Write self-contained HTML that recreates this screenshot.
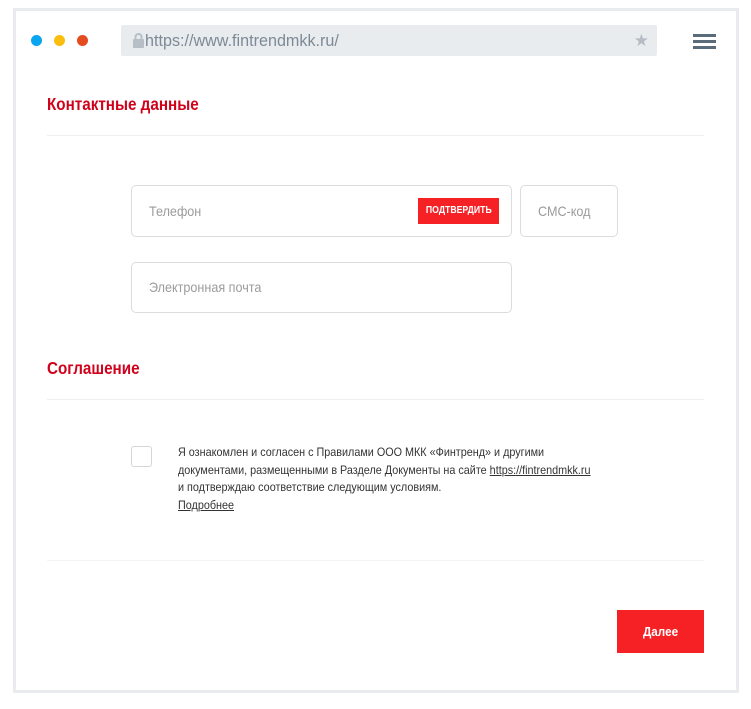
<!DOCTYPE html>
<html><head><meta charset="utf-8"><style>
*{box-sizing:border-box;margin:0;padding:0}
body{width:751px;height:709px;background:#fff;font-family:"Liberation Sans Narrow","Liberation Sans",sans-serif;position:relative;overflow:hidden}
.frame{position:absolute;left:13px;top:8px;width:726px;height:685px;border:3px solid #e9ebee}
.dot{position:absolute;top:35px;width:11px;height:11px;border-radius:50%}
.url{position:absolute;left:121px;top:25px;width:536px;height:31px;background:#e9ecef;border-radius:2px;color:#7d8a96;font-size:17px;line-height:31px;padding-left:24px}
.h{position:absolute;left:47px;color:#d0021b;font-weight:bold;font-size:17.5px;transform:scaleX(0.87);transform-origin:left}
.line{position:absolute;left:47px;width:657px;height:1px;background:#eef0f3}
.inp{position:absolute;border:1px solid #dcdcdc;border-radius:5px;color:#9b9b9b;font-size:14px;padding-left:17px}
.sx{display:inline-block;transform-origin:left;white-space:nowrap}
.btn{position:absolute;background:#f52125;color:#fff;font-weight:bold}
</style></head><body>
<div class="frame"></div>
<div class="dot" style="left:31px;background:#0aa5f0"></div>
<div class="dot" style="left:54px;background:#fbbd0e"></div>
<div class="dot" style="left:77px;background:#e44b1f"></div>
<div class="url">
<svg style="position:absolute;left:11px;top:8px" width="13" height="15" viewBox="0 0 13 15"><rect x="1" y="6" width="11" height="9" rx="1" fill="#b6bec6"/><path d="M3.5 6V4a3 3 0 0 1 6 0v2" stroke="#b6bec6" stroke-width="2" fill="none"/></svg><span class="sx" style="transform:scaleX(0.95)">https://www.fintrendmkk.ru/</span>
<span style="position:absolute;right:8px;top:0;color:#b4bcc4;font-size:17px">★</span></div>
<div style="position:absolute;left:693px;top:34px;width:23px;height:3px;background:#5a6b7a;box-shadow:0 6px 0 #5a6b7a,0 12px 0 #5a6b7a"></div>
<div class="h" style="top:94px">Контактные данные</div>
<div class="line" style="top:135px"></div>
<div class="inp" style="left:131px;top:185px;width:381px;height:52px;line-height:50px"><span class="sx" style="transform:scaleX(0.9)">Телефон</span></div>
<div class="btn" style="left:418px;top:198px;width:81px;height:26px;font-size:10px;line-height:26px;text-align:center"><span class="sx" style="transform:scaleX(0.87);transform-origin:center">ПОДТВЕРДИТЬ</span></div>
<div class="inp" style="left:520px;top:185px;width:98px;height:52px;line-height:50px"><span class="sx" style="transform:scaleX(0.9)">СМС-код</span></div>
<div class="inp" style="left:131px;top:262px;width:381px;height:51px;line-height:49px"><span class="sx" style="transform:scaleX(0.9)">Электронная почта</span></div>
<div class="h" style="top:358px">Соглашение</div>
<div class="line" style="top:399px"></div>
<div style="position:absolute;left:131px;top:446px;width:21px;height:21px;border:1px solid #d5d5d5;border-radius:3px"></div>
<div style="position:absolute;left:178px;top:444px;font-size:12px;line-height:17.5px;color:#333;white-space:nowrap;transform:scaleX(0.9);transform-origin:left">Я ознакомлен и согласен с Правилами ООО МКК «Финтренд» и другими<br>документами, размещенными в Разделе Документы на сайте <u>https://fintrendmkk.ru</u><br>и подтверждаю соответствие следующим условиям.<br><u>Подробнее</u></div>
<div class="line" style="top:560px;background:#f2f4f7"></div>
<div class="btn" style="left:617px;top:610px;width:87px;height:43px;font-size:13px;line-height:43px;text-align:center"><span class="sx" style="transform:scaleX(0.9);transform-origin:center">Далее</span></div>
</body></html>
